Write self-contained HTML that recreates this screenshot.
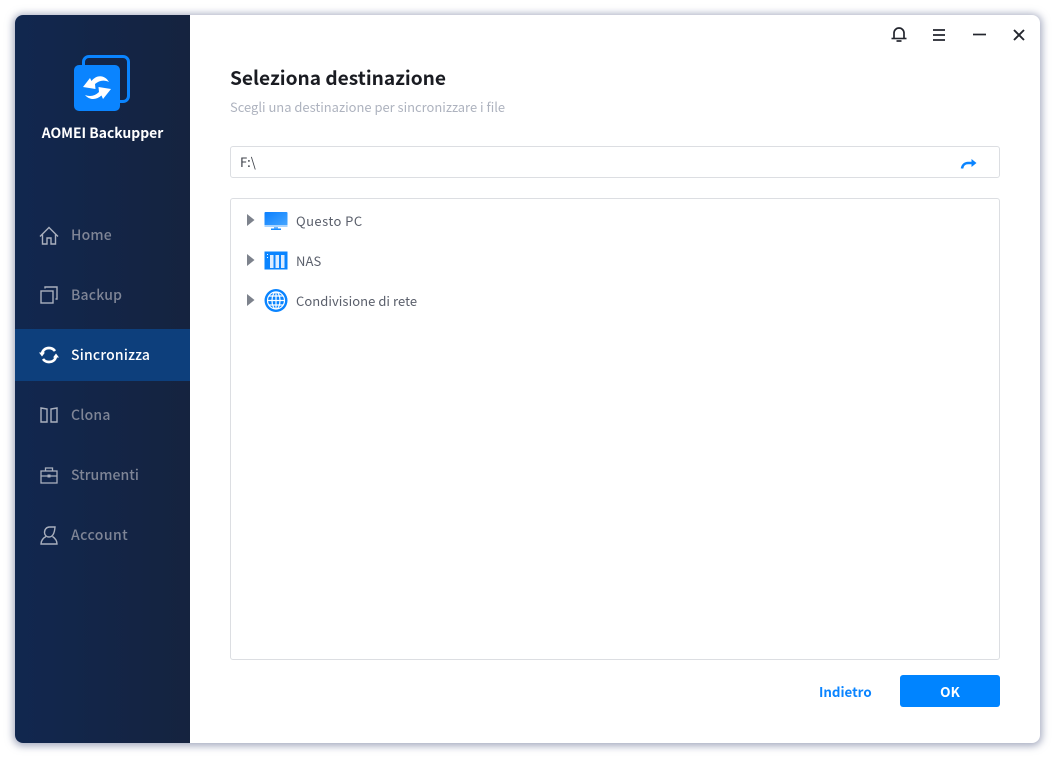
<!DOCTYPE html>
<html lang="it"><head><meta charset="utf-8"><title>AOMEI Backupper</title>
<style>
html,body{margin:0;padding:0;width:1055px;height:758px;overflow:hidden;background:#fff;font-family:"Noto Sans CJK SC","Liberation Sans",sans-serif}
#win{position:absolute;left:15px;top:15px;width:1025px;height:728px;background:#fff;border-radius:8px;box-shadow:0 1px 8px 2px rgba(105,115,150,.6);overflow:hidden}
#side{position:absolute;left:0;top:0;width:175px;height:728px;background:linear-gradient(90deg,#11274f,#15233f)}
.t{position:absolute;white-space:nowrap;line-height:20px}
.nav{font-size:14px;font-weight:500;color:#7f8596;left:71px;letter-spacing:.2px}
.i{position:absolute;overflow:visible}
</style></head><body>
<div id="win"><div id="side"></div></div>
<div style="position:absolute;left:15px;top:329px;width:175px;height:52px;background:#0d3f7c"></div>

<svg class="i" style="left:73px;top:54px" width="58" height="58" viewBox="0 0 58 58">
<path d="M10.500 11V8a5.500 5.500 0 0 1 5.500-5.500H50a5.500 5.500 0 0 1 5.500 5.500V42a5.500 5.500 0 0 1-5.500 5.500H47" fill="none" stroke="#0a84ff" stroke-width="3"/>
<rect x="1" y="11" width="46" height="46" rx="5" fill="#0a84ff"/>
<path d="M10 33L17 24L18.500 27C24 20 32 21 36 28C31 25.500 26 26.500 22 30L22.500 35Z" fill="#fff"/>
<path d="M38 35L30 45L28.500 41.500C23 46.500 16 46 12 41C17 43 22 42 26 38L25.500 33Z" fill="#fff"/>
</svg>
<div class="t" style="left:15px;width:175px;text-align:center;top:123px;font-size:13.900px;font-weight:700;color:#fff">AOMEI Backupper</div>

<svg class="i" style="left:39px;top:226px" width="20" height="20" fill="none" stroke="#a9afbd" stroke-width="1.400"><path d="M1 10.500L10 1.500l9 9M3.500 8.500V18H8v-6h4v6h4.500V8.500"/></svg>
<div class="t nav" style="top:225px">Home</div>
<svg class="i" style="left:40px;top:286px" width="18" height="18" fill="none" stroke="#a9afbd" stroke-width="1.400"><rect x="1" y="5" width="12" height="12"/><path d="M5 2.500V1h12v12h-1.500"/></svg>
<div class="t nav" style="top:285px">Backup</div>
<svg class="i" style="left:39px;top:346px" width="20" height="18" viewBox="0 0 20 18" fill="none" stroke="#fff" stroke-width="2.700"><path d="M3 8c.5-4 3.500-6 7-6 2.500 0 4.500 1 6 3M17 10c-.5 4-3.500 6-7 6-2.500 0-4.500-1-6-3"/><path d="M0 6.500h6L3 10.500zM20 11.500h-6l3-4z" fill="#fff" stroke="none"/></svg>
<div class="t nav" style="top:345px;color:#fff">Sincronizza</div>
<svg class="i" style="left:40px;top:407px" width="18" height="16" fill="none" stroke="#a9afbd" stroke-width="1.400"><path d="M1 1l6 1v13H1zM17 1l-6 1v13h6z"/></svg>
<div class="t nav" style="top:405px">Clona</div>
<svg class="i" style="left:40px;top:467px" width="18" height="17" fill="none" stroke="#a9afbd" stroke-width="1.300"><rect x="1" y="4" width="16" height="12"/><path d="M1 9h16M5.500 4V1h7v3"/><rect x="7.500" y="7.500" width="3" height="3" fill="#a9afbd" stroke="none"/></svg>
<div class="t nav" style="top:465px;letter-spacing:.05px">Strumenti</div>
<svg class="i" style="left:40px;top:526px" width="18" height="19" fill="none" stroke="#a9afbd" stroke-width="1.400"><path d="M15 1H9.500C6.500 1 4.500 3.500 4.500 6.500 4.500 9 6.500 11 9 11c3.500 0 5.500-3.500 6-10zM6 10.500C3 12 1 15 1 18h16c0-3-1.500-5.500-4.500-7.500"/></svg>
<div class="t nav" style="top:525px;letter-spacing:.45px">Account</div>

<svg class="i" style="left:891px;top:26px" width="16" height="17" fill="none" stroke="#23262e" stroke-width="1.700"><path d="M3 12V7a5 5 0 0 1 10 0v5"/><path d="M.5 12.500h15" stroke-width="1.600"/><path d="M5.500 15h5"/></svg>
<svg class="i" style="left:933px;top:29px" width="12" height="12" fill="none" stroke="#23262e" stroke-width="1.700"><path d="M0 1h12M0 6h12M0 11h12"/></svg>
<svg class="i" style="left:973px;top:33px" width="13" height="3" fill="none" stroke="#23262e" stroke-width="1.700"><path d="M0 1.500h13"/></svg>
<svg class="i" style="left:1013px;top:29px" width="12" height="12" fill="none" stroke="#23262e" stroke-width="1.900"><path d="M1 1l10 10M11 1L1 11"/></svg>

<div class="t" style="left:230px;top:65px;line-height:24px;font-size:19.100px;font-weight:700;color:#1a1c22">Seleziona destinazione</div>
<div class="t" style="left:230px;top:97px;font-size:12.950px;color:#aeb3bf">Scegli una destinazione per sincronizzare i file</div>

<div style="position:absolute;left:230px;top:146px;width:768px;height:30px;border:1px solid #dcdee2;border-radius:3px"></div>
<div class="t" style="left:240px;top:152px;font-size:13px;color:#3c4048">F:\</div>
<svg class="i" style="left:961px;top:158px" width="16" height="11" fill="none" stroke="#0a84ff" stroke-width="2.500"><path d="M1 10.500c.5-3.500 3-5.500 6-5.500h6"/><path d="M10.500 1L15.500 5l-5 4z" fill="#0a84ff" stroke="none"/></svg>

<div style="position:absolute;left:230px;top:198px;width:768px;height:460px;border:1px solid #dcdee2;border-radius:3px"></div>

<svg class="i" style="left:247px;top:214px" width="8" height="12"><path d="M0 0l7.500 6L0 12z" fill="#7d828c"/></svg>
<svg class="i" style="left:264px;top:211px" width="24" height="20"><defs><linearGradient id="m" x1="0" y1="0" x2="1" y2="1"><stop offset="0" stop-color="#0a7fff"/><stop offset="1" stop-color="#4aa8ff"/></linearGradient></defs><rect x="0.500" y="1" width="23" height="15" rx="1" fill="url(#m)"/><rect x="0.500" y="14" width="23" height="2" fill="#a9d4ff"/><rect x="10" y="16" width="4" height="1.500" fill="#6fb6ff"/><rect x="7" y="17.500" width="10" height="1.500" fill="#1a8cff"/></svg>
<div class="t" style="left:296px;top:211px;font-size:13px;letter-spacing:.45px;color:#5a5f6b">Questo PC</div>

<svg class="i" style="left:247px;top:254px" width="8" height="12"><path d="M0 0l7.500 6L0 12z" fill="#7d828c"/></svg>
<svg class="i" style="left:264px;top:251px" width="24" height="19"><rect x="0.500" y="0.500" width="23" height="18" fill="#0a84ff"/><rect x="6" y="4" width="3.500" height="13" fill="#dcecff"/><rect x="11.500" y="4" width="3.500" height="13" fill="#dcecff"/><rect x="17" y="4" width="3.500" height="13" fill="#dcecff"/><rect x="3" y="3" width="1" height="1" fill="#fff"/><rect x="3" y="6" width="1" height="1" fill="#fff"/></svg>
<div class="t" style="left:296px;top:251px;font-size:13px;letter-spacing:.1px;color:#5a5f6b">NAS</div>

<svg class="i" style="left:247px;top:294px" width="8" height="12"><path d="M0 0l7.500 6L0 12z" fill="#7d828c"/></svg>
<svg class="i" style="left:264px;top:289px" width="24" height="23" fill="none" stroke="#fff" stroke-width="1.200"><circle cx="12" cy="11.500" r="11.500" fill="#0a84ff" stroke="none"/><circle cx="12" cy="11.500" r="8.500"/><ellipse cx="12" cy="11.500" rx="4" ry="8.500"/><path d="M3.500 11.500h17M5 7h14M5 16h14M12 3v17"/></svg>
<div class="t" style="left:296px;top:291px;font-size:13px;letter-spacing:.05px;color:#5a5f6b">Condivisione di rete</div>

<div class="t" style="left:819px;top:682px;font-size:13.300px;font-weight:700;color:#0a84ff">Indietro</div>
<div style="position:absolute;left:900px;top:675px;width:100px;height:32px;line-height:33px;background:#0084ff;border-radius:3px;color:#fff;font-size:13.500px;font-weight:700;text-align:center">OK</div>
</body></html>
